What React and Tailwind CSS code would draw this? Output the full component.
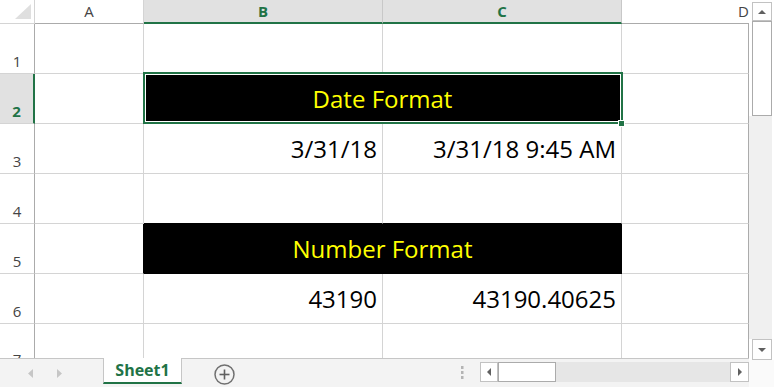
const G = "#217346";

function Tri({ dir, color, w, h }) {
  const pts = {
    up: `0,${h} ${w / 2},0 ${w},${h}`,
    down: `0,0 ${w},0 ${w / 2},${h}`,
    left: `${w},0 ${w},${h} 0,${h / 2}`,
    right: `0,0 ${w},${h / 2} 0,${h}`,
  }[dir];
  return (
    <svg width={w} height={h} viewBox={`0 0 ${w} ${h}`} className="block">
      <polygon points={pts} fill={color} />
    </svg>
  );
}

function RowHead({ n }) {
  return (
    <div className="flex items-end justify-center pb-[4px] bg-white border-r border-r-[#ababab] border-b border-b-[#d4d4d4] text-[15px] leading-[15px] text-[#444]">
      {n}
    </div>
  );
}

function Cell({ children, extra = "" }) {
  return (
    <div className={"flex items-center justify-end pr-[5px] border-r border-b border-[#d4d4d4] text-[24px] leading-[24px] text-black whitespace-nowrap " + extra}>
      {children}
    </div>
  );
}

function CellD({ last }) {
  return <div className={last ? "border-r border-r-[#ababab]" : "border-r border-r-[#ababab] border-b border-b-[#d4d4d4]"} />;
}

export default function App() {
  return (
    <div className="w-[774px] h-[387px] bg-white overflow-hidden flex font-['Open_Sans',sans-serif]">
      {/* left column */}
      <div className="w-[749px] flex flex-col">
        <div className="relative w-[749px] h-[358px] grid grid-cols-[35px_109px_239px_239px_127px] grid-rows-[24px_repeat(6,50px)_34px]">
          {/* header row */}
          <div className="border-r border-b border-[#d4d4d4] bg-white pl-[15px] pt-[4px]">
            <svg width="16" height="15" viewBox="0 0 16 15" className="block">
              <polygon points="16,0 16,15 0,15" fill="#dfdfdf" />
            </svg>
          </div>
          <div className="flex items-center justify-center bg-white border-r border-r-[#d4d4d4] border-b border-b-[#ababab] text-[15px] leading-[15px] text-[#444]">A</div>
          <div className="flex items-center justify-center bg-[#e1e1e1] border-r border-r-[#c8c8c8] border-b-2 border-b-[#217346] text-[15px] leading-[15px] font-bold text-[#217346]">B</div>
          <div className="flex items-center justify-center bg-[#e1e1e1] border-r border-r-[#c8c8c8] border-b-2 border-b-[#217346] text-[15px] leading-[15px] font-bold text-[#217346]">C</div>
          <div className="flex items-center justify-end bg-white border-b border-b-[#ababab] text-[15px] leading-[15px] text-[#444]">D</div>

          {/* row 1 */}
          <RowHead n="1" />
          <Cell />
          <Cell />
          <Cell />
          <CellD />

          {/* row 2 */}
          <div className="flex items-end justify-center pb-[4px] bg-[#e1e1e1] border-r-2 border-r-[#217346] border-b border-b-[#d4d4d4] text-[15px] leading-[15px] font-bold text-[#217346]">2</div>
          <Cell />
          <div className="col-span-2 flex items-center justify-center bg-black border-r border-b border-[#d4d4d4] text-[24px] leading-[24px] text-[#ffff00]">
            Date Format
          </div>
          <CellD />

          {/* row 3 */}
          <RowHead n="3" />
          <Cell />
          <Cell>3/31/18</Cell>
          <Cell>3/31/18 9:45 AM</Cell>
          <CellD />

          {/* row 4 */}
          <RowHead n="4" />
          <Cell />
          <Cell extra="border-b-black" />
          <Cell extra="border-b-black" />
          <CellD />

          {/* row 5 */}
          <RowHead n="5" />
          <Cell extra="border-r-black" />
          <div className="col-span-2 flex items-center justify-center bg-black border-r border-b border-black text-[24px] leading-[24px] text-[#ffff00]">
            Number Format
          </div>
          <CellD />

          {/* row 6 */}
          <RowHead n="6" />
          <Cell />
          <Cell>43190</Cell>
          <Cell>43190.40625</Cell>
          <CellD />

          {/* row 7 (cut) */}
          <div className="overflow-hidden flex justify-center pt-[28px] bg-white border-r border-r-[#ababab] text-[15px] leading-[15px] text-[#444]">7</div>
          <div className="border-r border-[#d4d4d4]" />
          <div className="border-r border-[#d4d4d4]" />
          <div className="border-r border-[#d4d4d4]" />
          <CellD last />

          {/* selection overlay */}
          <div className="absolute left-[143px] top-[72px] w-[480px] h-[52px] border-2 border-[#217346] shadow-[inset_0_0_0_1px_#ffffff]" />
          <div className="absolute left-[618px] top-[120px] w-[7px] h-[7px] bg-[#217346] border border-white" />
        </div>

        {/* bottom bar */}
        <div className="h-[29px] bg-[#f3f3f3] border-t border-t-[#c6c6c6] flex items-start">
          <div className="w-[103px] h-[28px] flex items-center">
            <div className="ml-[28px] mt-[1px]">
              <Tri dir="left" color="#c6c6c6" w={5} h={9} />
            </div>
            <div className="ml-[24px] mt-[1px]">
              <Tri dir="right" color="#c6c6c6" w={5} h={9} />
            </div>
          </div>
          <div className="relative -mt-px w-[79px] h-[26px] bg-white border-x border-x-[#c6c6c6] border-b-2 border-b-[#217346] flex items-center justify-center text-[16px] leading-[16px] font-bold text-[#217346]">
            Sheet1
          </div>
          <div className="ml-[32px] mt-[5px]">
            <svg width="21" height="21" viewBox="0 0 21 21" className="block">
              <circle cx="10.5" cy="10.5" r="9.5" fill="none" stroke="#707070" strokeWidth="1.5" />
              <line x1="10.5" y1="5.5" x2="10.5" y2="15.5" stroke="#606060" strokeWidth="1.6" />
              <line x1="5.5" y1="10.5" x2="15.5" y2="10.5" stroke="#606060" strokeWidth="1.6" />
            </svg>
          </div>
          <div className="ml-[226px] mt-[7px]">
            <svg width="3" height="13" viewBox="0 0 3 13" className="block">
              <rect x="0" y="0" width="2.5" height="3" fill="#b4b4b4" />
              <rect x="0" y="5" width="2.5" height="3" fill="#b4b4b4" />
              <rect x="0" y="10" width="2.5" height="3" fill="#b4b4b4" />
            </svg>
          </div>
          <div className="ml-[16px] mt-[3px] flex h-[20px]">
            <div className="w-[18px] h-[20px] bg-white border border-[#c2c2c2] flex items-center justify-center">
              <Tri dir="left" color="#606060" w={4} h={8} />
            </div>
            <div className="w-[58px] h-[20px] bg-white border border-[#ababab]" />
            <div className="w-[174px] h-[20px] bg-[#e6e6e6]" />
            <div className="w-[19px] h-[20px] bg-white border border-[#c2c2c2] flex items-center justify-center">
              <Tri dir="right" color="#606060" w={4} h={8} />
            </div>
          </div>
        </div>
      </div>

      {/* vertical scrollbar column */}
      <div className="w-[25px] h-[387px] flex flex-col bg-white">
        <div className="h-[2px]" />
        <div className="ml-[3px] w-[20px] h-[19px] bg-white border border-[#c2c2c2] flex items-center justify-center">
          <Tri dir="up" color="#606060" w={8} h={4} />
        </div>
        <div className="ml-[3px] w-[20px] h-[95px] bg-white border border-[#ababab]" />
        <div className="w-[23px] h-[223px] bg-[#f0f0f0]" />
        <div className="ml-[3px] w-[20px] h-[21px] bg-white border border-[#c2c2c2] flex items-center justify-center">
          <Tri dir="down" color="#606060" w={8} h={4} />
        </div>
        <div className="flex-1 bg-[#fafafa]" />
      </div>
    </div>
  );
}
